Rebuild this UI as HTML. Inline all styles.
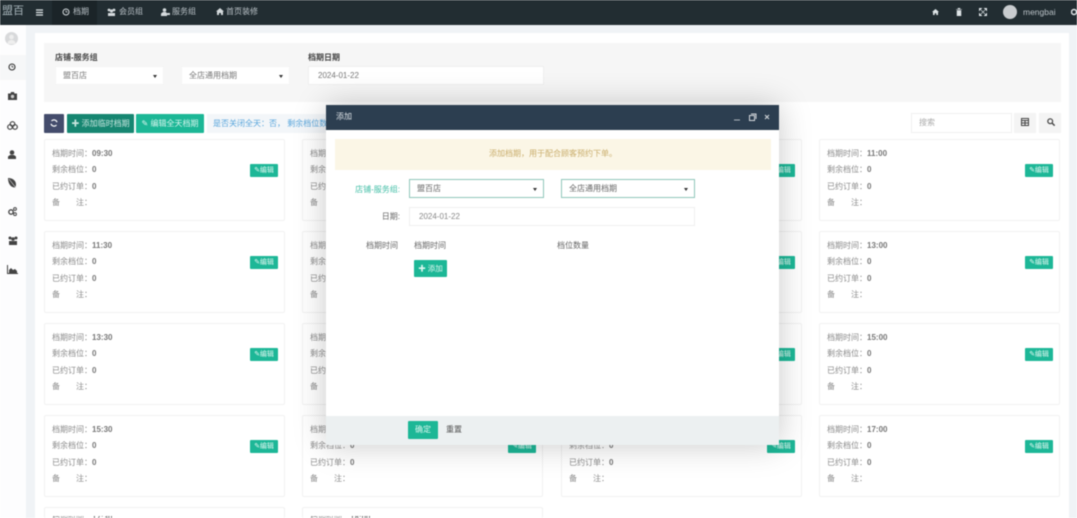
<!DOCTYPE html>
<html lang="zh"><head><meta charset="utf-8"><title>档期</title>
<style>
*{box-sizing:border-box}
html,body{margin:0;padding:0;width:1077px;height:518px;overflow:hidden;background:#fff}
body{font-family:"Liberation Sans","Noto Sans CJK TC",sans-serif;font-size:8px;color:#888;position:relative}
#r{position:absolute;left:0;top:0;width:1077px;height:518px;overflow:hidden;filter:blur(.5px)}
.a{position:absolute;white-space:nowrap}
.top{left:0;top:0;width:1077px;height:25px;background:#222d32}
.nv{color:#b9c1c6;line-height:12px;top:6px;font-size:8px}
.side{left:0;top:25px;width:26px;height:493px;background:#fdfdfe}
.bg{left:26px;top:25px;width:1051px;height:493px;background:#f0f3f6}
.pn{left:35px;top:33px;width:1034px;height:485px;background:#fff}
.form{left:44px;top:43px;width:1017px;height:59px;background:#f6f6f6}
.ctl{background:#fff;border:1px solid #efefef;color:#777;line-height:17px;padding-left:9px;font-size:8px}
.car{position:absolute;right:6px;top:8px;width:0;height:0;border:2.500px solid transparent;border-top:3px solid #333;border-bottom:0}
.btn{color:#fff;text-align:center;border-radius:1px;font-size:8px}
.card{position:absolute;width:241px;height:82px;background:#fff;border:1px solid #f1f1f1;border-radius:2px}
.card.end{height:11px;border-bottom:0;overflow:hidden}
.card span{position:absolute;left:7px;white-space:nowrap;line-height:10px;color:#8a8a8a}
.card b{font-weight:bold;color:#777}
.card i{position:absolute;left:205px;top:24px;width:28px;height:13px;background:#1db797;color:#e0f7f1;font-style:normal;font-size:7px;line-height:13px;text-align:center;border-radius:1px}
.l1{top:9px}.l2{top:25px}.l3{top:42px}.l4{top:58px}
svg{position:absolute;display:block}
.modal{left:326px;top:105px;width:453px;height:340px;background:#fff;box-shadow:0 0 30px rgba(0,0,0,.22)}
</style></head><body><div id="r">
<div class="a bg"></div><div class="a side"></div><div class="a pn"></div><div class="a form"></div>

<div class="a top"></div>
<div class="a" style="left:52px;top:0;width:45px;height:25px;background:#1b2428"></div>
<div class="a" style="left:2px;top:4px;color:#a9b6bc;font-size:11px;line-height:15px">盟百</div>
<svg style="left:36px;top:9px" width="7" height="7"><path d="M0 1h7M0 3.500h7M0 6h7" stroke="#dfe5e8" stroke-width="1.200"/></svg>
<svg style="left:62px;top:8px" width="8" height="8"><circle cx="4" cy="4" r="3" fill="none" stroke="#d5dadd" stroke-width="1"/><path d="M4 2.200V4h1.500" stroke="#d5dadd" stroke-width=".7" fill="none"/></svg>
<div class="a nv" style="left:73px">档期</div>
<svg style="left:107px;top:8px" width="9" height="8"><circle cx="2" cy="2" r="1.400" fill="#d5dadd"/><circle cx="7" cy="2" r="1.400" fill="#d5dadd"/><circle cx="4.500" cy="3" r="1.600" fill="#d5dadd"/><path d="M1 8V5h7v3z" fill="#d5dadd"/></svg>
<div class="a nv" style="left:119px">会员组</div>
<svg style="left:161px;top:8px" width="9" height="8"><circle cx="3.500" cy="2" r="1.800" fill="#d5dadd"/><path d="M0 8V5.500L2 4h3l1 1.500V8z" fill="#d5dadd"/><path d="M6 5h3v2H6z" fill="#d5dadd"/></svg>
<div class="a nv" style="left:172px">服务组</div>
<svg style="left:216px;top:8px" width="8" height="7"><path d="M0 3.500L4 0l4 3.500H7V7H5V5H3v2H1V3.500z" fill="#d5dadd"/></svg>
<div class="a nv" style="left:226px">首页装修</div>

<svg style="left:932px;top:9px" width="7" height="6"><path d="M0 3L3.500 0 7 3H6v3H4.300V4.300H2.700V6H1V3z" fill="#dfe5e8"/></svg>
<svg style="left:956px;top:8px" width="6" height="8"><path d="M0 1.500h6M1 2.500h4V8H1zM2 0h2v1H2z" fill="#dfe5e8" stroke="#dfe5e8" stroke-width=".5"/></svg>
<svg style="left:979px;top:8px" width="8" height="8"><path d="M0 0h3L0 3zM8 0v3L5 0zM0 8V5l3 3zM8 8H5l3-3zM2 2l4 4M6 2L2 6" fill="#dfe5e8" stroke="#dfe5e8" stroke-width=".6"/></svg>
<div class="a" style="left:1003px;top:5px;width:14px;height:14px;border-radius:50%;background:#c9cccf"></div>
<div class="a" style="left:1023px;top:6px;color:#b9c1c6;font-size:8.500px;line-height:12px">mengbai</div>
<svg style="left:1071px;top:8px" width="6" height="8"><circle cx="3" cy="4" r="2.500" fill="none" stroke="#dfe5e8" stroke-width="1.500"/></svg>

<div class="a" style="left:5px;top:32px;width:13px;height:13px;border-radius:50%;background:#d8d9db"></div>
<svg style="left:5px;top:32px" width="13" height="13"><circle cx="6.500" cy="5" r="2.300" fill="#eeeeee"/><path d="M2.500 12c0-3 2-4 4-4s4 1 4 4z" fill="#eeeeee"/></svg>
<div class="a" style="left:0;top:55px;width:26px;height:25px;background:#f6f7f8"></div>
<svg style="left:8px;top:63px" width="8" height="8"><circle cx="4" cy="4" r="3" fill="none" stroke="#333" stroke-width="1.100"/><path d="M4 2.200V4h1.500" stroke="#333" stroke-width=".7" fill="none"/></svg>
<svg style="left:8px;top:92px" width="9" height="8"><path d="M0 1.500h2.500L3 0h3l.5 1.500H9V8H0z" fill="#444"/><circle cx="4.500" cy="4.500" r="1.700" fill="#ccc"/></svg>
<svg style="left:7px;top:121px" width="11" height="9"><circle cx="5.500" cy="3" r="2.300" fill="none" stroke="#444" stroke-width="1.200"/><circle cx="3" cy="6" r="2.300" fill="none" stroke="#444" stroke-width="1.200"/><circle cx="8" cy="6" r="2.300" fill="none" stroke="#444" stroke-width="1.200"/></svg>
<svg style="left:8px;top:150px" width="8" height="9"><circle cx="4" cy="2.500" r="2.300" fill="#444"/><path d="M0 9V6.500L2 5h4l2 1.500V9z" fill="#444"/></svg>
<svg style="left:8px;top:178px" width="8" height="10"><path d="M0 0C5 0 8 3 8 6.500 8 8 7.500 9 7 9.500 3 9.500 0 6 0 0z" fill="#444"/><path d="M1 1l7 9" stroke="#ddd" stroke-width=".6"/></svg>
<svg style="left:8px;top:207px" width="9" height="9"><circle cx="3" cy="5" r="2.200" fill="none" stroke="#444" stroke-width="1.300"/><circle cx="7" cy="2" r="1.400" fill="none" stroke="#444" stroke-width="1"/><circle cx="7" cy="7.200" r="1.400" fill="none" stroke="#444" stroke-width="1"/></svg>
<svg style="left:8px;top:236px" width="10" height="9"><circle cx="2" cy="2" r="1.500" fill="#444"/><circle cx="8" cy="2" r="1.500" fill="#444"/><circle cx="5" cy="3" r="1.800" fill="#444"/><path d="M1 9V5h8v4z" fill="#444"/></svg>
<svg style="left:7px;top:265px" width="11" height="9"><path d="M.5 0v8.500H11" stroke="#444" fill="none"/><path d="M2 8V5l2-2 2 2 2-1 2 2v2z" fill="#444"/></svg>

<div class="a" style="left:55px;top:52px;color:#444;line-height:11px;font-weight:bold">店铺-服务组</div>
<div class="a" style="left:308px;top:52px;color:#444;line-height:11px;font-weight:bold">档期日期</div>
<div class="a ctl" style="left:55px;top:66px;width:109px;height:19px;border-color:#f4f4f4;padding-left:7px">盟百店<div class="car"></div></div>
<div class="a ctl" style="left:181px;top:66px;width:109px;height:19px;padding-left:7px;border-color:#f4f4f4">全店通用档期<div class="car"></div></div>
<div class="a ctl" style="left:308px;top:66px;width:236px;height:19px">2024-01-22</div>

<div class="a btn" style="left:44px;top:114px;width:20px;height:19px;background:#444c6c"></div>
<svg style="left:50px;top:119px" width="8" height="8"><path d="M7 3.200A3.200 3.200 0 0 0 1.500 2M1 4.800A3.200 3.200 0 0 0 6.500 6" fill="none" stroke="#fff" stroke-width="1.200"/></svg>
<div class="a btn" style="left:67px;top:114px;width:67px;height:19px;background:#168671;line-height:19px;color:#c8e6df">✚ 添加临时档期</div>
<div class="a btn" style="left:136px;top:114px;width:68px;height:19px;background:#1cb796;line-height:19px;color:#d8f5ee">✎ 编辑全天档期</div>
<div class="a" style="left:207px;top:114px;width:122px;height:19px;background:#f3f6f9;color:#5aa6dc;line-height:19px;padding-left:6px;overflow:hidden">是否关闭全天：否， 剩余档位数量</div>
<div class="a ctl" style="left:911px;top:113px;width:101px;height:20px;line-height:18px;padding-left:7px;color:#aaa;border-color:#f0f0f0">搜索</div>
<div class="a" style="left:1014px;top:113px;width:22px;height:20px;background:#f4f4f4"></div>
<div class="a" style="left:1039px;top:113px;width:22px;height:20px;background:#f4f4f4"></div>
<svg style="left:1021px;top:118px" width="8" height="8"><path d="M.5.500h7v7h-7zM.5 2.500h7M.5 5h7M4 2.500V7.500" fill="none" stroke="#444"/></svg>
<svg style="left:1047px;top:118px" width="8" height="8"><circle cx="3.200" cy="3.200" r="2.400" fill="none" stroke="#444" stroke-width="1.200"/><path d="M5 5l2.700 2.700" stroke="#444" stroke-width="1.400"/></svg>

<div class="card" style="left:44px;top:139px"><span class="l1">档期时间：<b>09:30</b></span><span class="l2">剩余档位：<b>0</b></span><span class="l3">已约订单：<b>0</b></span><span class="l4">备　　注：</span><i>✎编辑</i></div>
<div class="card" style="left:302px;top:139px"><span class="l1">档期时间：<b>10:00</b></span><span class="l2">剩余档位：<b>0</b></span><span class="l3">已约订单：<b>0</b></span><span class="l4">备　　注：</span><i>✎编辑</i></div>
<div class="card" style="left:561px;top:139px"><span class="l1">档期时间：<b>10:30</b></span><span class="l2">剩余档位：<b>0</b></span><span class="l3">已约订单：<b>0</b></span><span class="l4">备　　注：</span><i>✎编辑</i></div>
<div class="card" style="left:819px;top:139px"><span class="l1">档期时间：<b>11:00</b></span><span class="l2">剩余档位：<b>0</b></span><span class="l3">已约订单：<b>0</b></span><span class="l4">备　　注：</span><i>✎编辑</i></div>

<div class="card" style="left:44px;top:231px"><span class="l1">档期时间：<b>11:30</b></span><span class="l2">剩余档位：<b>0</b></span><span class="l3">已约订单：<b>0</b></span><span class="l4">备　　注：</span><i>✎编辑</i></div>
<div class="card" style="left:302px;top:231px"><span class="l1">档期时间：<b>12:00</b></span><span class="l2">剩余档位：<b>0</b></span><span class="l3">已约订单：<b>0</b></span><span class="l4">备　　注：</span><i>✎编辑</i></div>
<div class="card" style="left:561px;top:231px"><span class="l1">档期时间：<b>12:30</b></span><span class="l2">剩余档位：<b>0</b></span><span class="l3">已约订单：<b>0</b></span><span class="l4">备　　注：</span><i>✎编辑</i></div>
<div class="card" style="left:819px;top:231px"><span class="l1">档期时间：<b>13:00</b></span><span class="l2">剩余档位：<b>0</b></span><span class="l3">已约订单：<b>0</b></span><span class="l4">备　　注：</span><i>✎编辑</i></div>

<div class="card" style="left:44px;top:323px"><span class="l1">档期时间：<b>13:30</b></span><span class="l2">剩余档位：<b>0</b></span><span class="l3">已约订单：<b>0</b></span><span class="l4">备　　注：</span><i>✎编辑</i></div>
<div class="card" style="left:302px;top:323px"><span class="l1">档期时间：<b>14:00</b></span><span class="l2">剩余档位：<b>0</b></span><span class="l3">已约订单：<b>0</b></span><span class="l4">备　　注：</span><i>✎编辑</i></div>
<div class="card" style="left:561px;top:323px"><span class="l1">档期时间：<b>14:30</b></span><span class="l2">剩余档位：<b>0</b></span><span class="l3">已约订单：<b>0</b></span><span class="l4">备　　注：</span><i>✎编辑</i></div>
<div class="card" style="left:819px;top:323px"><span class="l1">档期时间：<b>15:00</b></span><span class="l2">剩余档位：<b>0</b></span><span class="l3">已约订单：<b>0</b></span><span class="l4">备　　注：</span><i>✎编辑</i></div>

<div class="card" style="left:44px;top:415px"><span class="l1">档期时间：<b>15:30</b></span><span class="l2">剩余档位：<b>0</b></span><span class="l3">已约订单：<b>0</b></span><span class="l4">备　　注：</span><i>✎编辑</i></div>
<div class="card" style="left:302px;top:415px"><span class="l1">档期时间：<b>16:00</b></span><span class="l2">剩余档位：<b>0</b></span><span class="l3">已约订单：<b>0</b></span><span class="l4">备　　注：</span><i>✎编辑</i></div>
<div class="card" style="left:561px;top:415px"><span class="l1">档期时间：<b>16:30</b></span><span class="l2">剩余档位：<b>0</b></span><span class="l3">已约订单：<b>0</b></span><span class="l4">备　　注：</span><i>✎编辑</i></div>
<div class="card" style="left:819px;top:415px"><span class="l1">档期时间：<b>17:00</b></span><span class="l2">剩余档位：<b>0</b></span><span class="l3">已约订单：<b>0</b></span><span class="l4">备　　注：</span><i>✎编辑</i></div>

<div class="card end" style="left:44px;top:507px"><span class="l1" style="top:8px;line-height:3px;height:3px;overflow:hidden">档期时间：<b>17:30</b></span></div>
<div class="card end" style="left:302px;top:507px"><span class="l1" style="top:8px;line-height:3px;height:3px;overflow:hidden">档期时间：<b>18:00</b></span></div>

<div class="a modal"></div>
<div class="a" style="left:326px;top:105px;width:453px;height:25px;background:#2c3e50"></div>
<div class="a" style="left:336px;top:111px;color:#dfe4e8;line-height:12px">添加</div>
<svg style="left:733px;top:113px" width="40" height="9"><path d="M1 7h6" stroke="#aeb6bd"/><path d="M16.500 2.500h5v5h-5zM18 1h5v5" fill="none" stroke="#d5d9dd"/><path d="M32 2l4 4M36 2l-4 4" stroke="#d5d9dd"/></svg>
<div class="a" style="left:335px;top:139px;width:436px;height:31px;background:#fbf6e6;color:#c9ad6b;text-align:center;line-height:30px">添加档期，用于配合顾客预约下单。</div>
<div class="a" style="left:340px;top:184px;width:60px;text-align:right;color:#3fbda5;line-height:11px">店铺-服务组:</div>
<div class="a ctl" style="left:409px;top:179px;width:135px;height:19px;border-color:#8fc6ba;color:#666;padding-left:7px">盟百店<div class="car"></div></div>
<div class="a ctl" style="left:561px;top:179px;width:134px;height:19px;border-color:#8fc6ba;color:#666;padding-left:7px">全店通用档期<div class="car"></div></div>
<div class="a" style="left:340px;top:211px;width:60px;text-align:right;color:#666;line-height:11px">日期:</div>
<div class="a ctl" style="left:409px;top:207px;width:286px;height:19px;color:#888;border-color:#efefef">2024-01-22</div>
<div class="a" style="left:340px;top:240px;width:58px;text-align:right;color:#666;line-height:11px">档期时间</div>
<div class="a" style="left:414px;top:240px;color:#666;line-height:11px">档期时间</div>
<div class="a" style="left:557px;top:240px;color:#666;line-height:11px">档位数量</div>
<div class="a btn" style="left:414px;top:260px;width:33px;height:17px;background:#1cb796;line-height:17px;font-size:7.500px;color:#e0f7f1">✚ 添加</div>
<div class="a" style="left:326px;top:416px;width:453px;height:29px;background:#ecf0f1"></div>
<div class="a btn" style="left:408px;top:421px;width:30px;height:18px;background:#1cb796;line-height:18px;color:#d8f5ee">确定</div>
<div class="a" style="left:446px;top:424px;color:#555;line-height:11px">重置</div>
</div></body></html>
